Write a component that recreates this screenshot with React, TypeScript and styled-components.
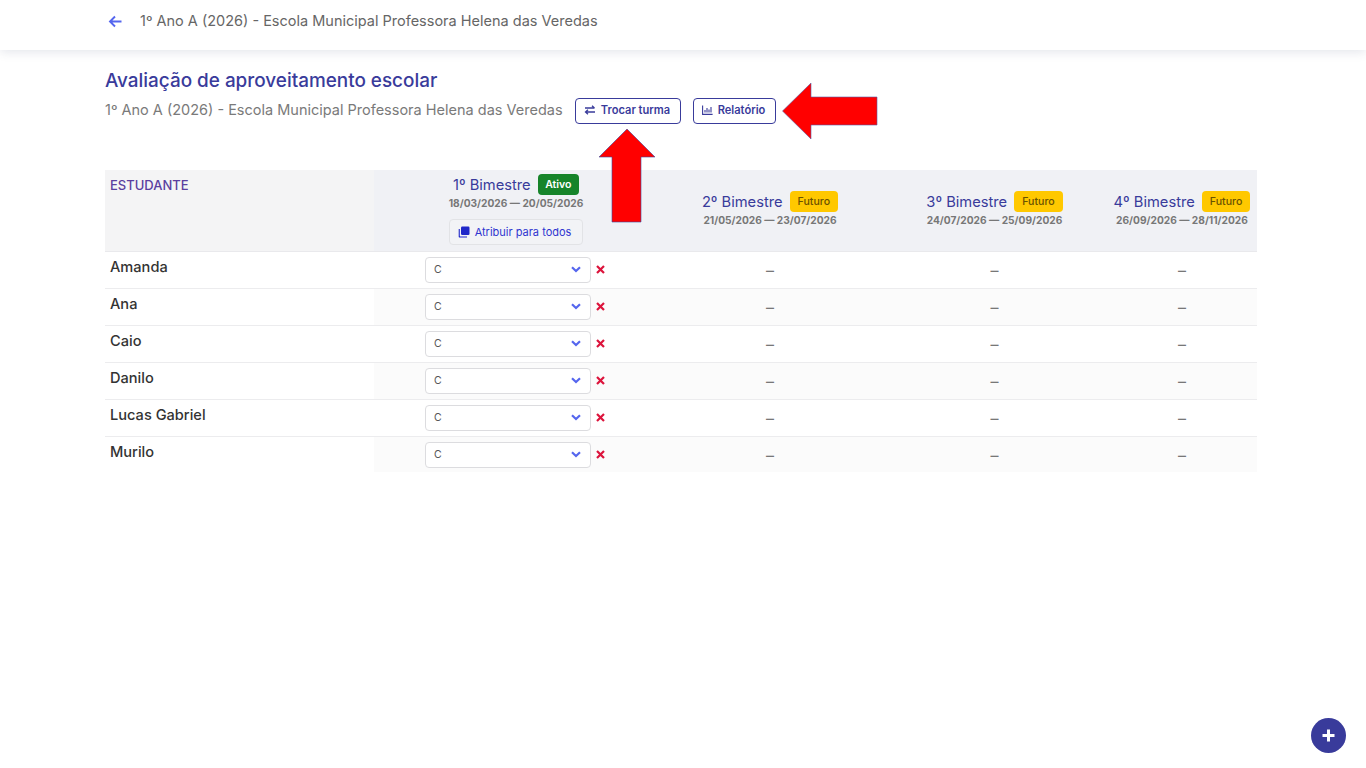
import React from "react";
import styled, { createGlobalStyle } from "styled-components";

const Global = createGlobalStyle`
  html, body { margin: 0; padding: 0; background: #fff; }
  body { font-family: Inter, "Noto Sans", "Liberation Sans", sans-serif; color: #333; }
  * { box-sizing: border-box; }
`;

const Page = styled.div`
  position: relative;
  min-height: 768px;
  background: #fff;
`;

const TopBar = styled.header`
  height: 50px;
  background: #fff;
  box-shadow: 0 2px 10px rgba(60, 70, 110, 0.14);
  padding-left: 108px;
  display: flex;
  align-items: center;
  gap: 17px;
  padding-bottom: 8px;
`;

const BackIcon = styled.svg`
  width: 15px;
  height: 15px;
  display: block;
`;

const TopTitle = styled.span`
  font-size: 14.5px;
  color: #666;
  white-space: nowrap;
  margin-bottom: 2px;
`;

const Main = styled.main`
  padding: 20px 109px 0 105px;
`;

const Heading = styled.h1`
  margin: 0;
  font-size: 18.9px;
  line-height: 21px;
  font-weight: 500;
  color: #393b9b;
`;

const SubRow = styled.div`
  display: flex;
  align-items: center;
  margin-top: 6px;
  height: 28px;
`;

const SubTitle = styled.span`
  font-size: 14.5px;
  color: #7a7a7a;
  width: 470px;
  white-space: nowrap;
  margin-bottom: 4px;
`;

const OutlineButton = styled.button<{ $w: number }>`
  width: ${(p) => p.$w}px;
  height: 26px;
  margin-right: 12px;
  border: 1px solid #393b9b;
  border-radius: 4px;
  background: #fff;
  color: #393b9b;
  font: 600 11.1px Inter, "Noto Sans", sans-serif;
  display: flex;
  align-items: center;
  justify-content: center;
  gap: 5px;
  padding: 0 2px 2px 0;
  white-space: nowrap;
`;

const Table = styled.div`
  margin-top: 45px;
  display: grid;
  grid-template-columns: 269px 284px 224px 225px 150px;
`;

const HeadStudent = styled.div`
  height: 82px;
  background: #f4f4f5;
  border-bottom: 1px solid #e9e9ec;
  padding: 7px 5px;
  font-size: 13px;
  line-height: 16px;
  font-weight: 500;
  color: #5b3f9f;
`;

const HeadCell = styled.div<{ $active?: boolean }>`
  height: 82px;
  background: #f0f1f5;
  border-bottom: 1px solid #e9e9ec;
  display: flex;
  flex-direction: column;
  align-items: center;
  justify-content: ${(p) => (p.$active ? "flex-start" : "center")};
  padding-top: ${(p) => (p.$active ? "4px" : "0")};
  padding-bottom: ${(p) => (p.$active ? "0" : "3px")};
`;

const HeadTitleRow = styled.div`
  display: flex;
  align-items: center;
  gap: 7px;
  height: 21px;
  margin-bottom: 1px;
`;

const BimTitle = styled.span`
  font-size: 14.7px;
  color: #393b9b;
  white-space: nowrap;
`;

const Badge = styled.span<{ $variant: "active" | "future" }>`
  height: 21px;
  padding: 0 ${(p) => (p.$variant === "active" ? 7.5 : 8)}px;
  border-radius: 4px;
  font-size: 10.6px;
  line-height: 21px;
  font-weight: ${(p) => (p.$variant === "active" ? 600 : 500)};
  background: ${(p) => (p.$variant === "active" ? "#17842a" : "#ffc800")};
  color: ${(p) => (p.$variant === "active" ? "#fff" : "#6a5200")};
`;

const Dates = styled.div`
  font-size: 10.2px;
  line-height: 14px;
  font-weight: 700;
  color: #777;
  white-space: nowrap;
`;

const AssignButton = styled.button`
  margin-top: 9px;
  width: 134px;
  height: 26px;
  border: 1px solid #e2e3e6;
  border-radius: 4px;
  background: #f2f3f6;
  color: #2f35d0;
  font: 400 11px Inter, "Noto Sans", sans-serif;
  display: flex;
  align-items: center;
  justify-content: center;
  gap: 5px;
  padding: 0 3px 1px 0;
  white-space: nowrap;
`;

const NameCell = styled.div<{ $last?: boolean }>`
  height: ${(p) => (p.$last ? "35px" : "37px")};
  padding: 6px 5px 0;
  font-size: 14.6px;
  line-height: 18px;
  font-weight: 500;
  color: #333;
  border-bottom: ${(p) => (p.$last ? "none" : "1px solid #ececee")};
`;

const Cell = styled.div<{ $last?: boolean; $even?: boolean }>`
  height: ${(p) => (p.$last ? "35px" : "37px")};
  display: flex;
  align-items: center;
  justify-content: center;
  padding-bottom: ${(p) => (p.$last ? "0" : "1px")};
  background: ${(p) => (p.$even ? "#fbfbfb" : "#fff")};
  border-bottom: ${(p) => (p.$last ? "none" : "1px solid #ececee")};
  font-size: 16px;
  color: #777;
`;

const GradeRow = styled.div`
  display: flex;
  align-items: center;
  gap: 5px;
  margin-right: 2px;
`;

const SelectBox = styled.div`
  width: 166px;
  height: 26px;
  border: 1px solid #dcdcdf;
  border-radius: 4px;
  background: #fff;
  display: flex;
  align-items: center;
  justify-content: space-between;
  padding: 0 9px 0 8px;
  font-size: 10.5px;
  color: #555;
`;

const Overlay = styled.svg`
  position: absolute;
  left: 0;
  top: 0;
  width: 1366px;
  height: 768px;
  pointer-events: none;
`;

const Fab = styled.button`
  position: fixed;
  left: 1311px;
  top: 718px;
  width: 35px;
  height: 35px;
  border: 0;
  border-radius: 50%;
  background: #393b9b;
  display: flex;
  align-items: center;
  justify-content: center;
  padding: 0;
`;

const periods = [
  { n: "2º Bimestre", d: "21/05/2026 — 23/07/2026" },
  { n: "3º Bimestre", d: "24/07/2026 — 25/09/2026" },
  { n: "4º Bimestre", d: "26/09/2026 — 28/11/2026" },
];
const students = ["Amanda", "Ana", "Caio", "Danilo", "Lucas Gabriel", "Murilo"];

export default function App() {
  return (
    <Page>
      <Global />
      <TopBar>
        <BackIcon viewBox="0 0 15 15" fill="none" stroke="#5566ee" strokeWidth="1.9">
          <path d="M13.5 7.5H2M7 2.5 2 7.5l5 5" />
        </BackIcon>
        <TopTitle>1º Ano A (2026) - Escola Municipal Professora Helena das Veredas</TopTitle>
      </TopBar>
      <Main>
        <Heading>Avaliação de aproveitamento escolar</Heading>
        <SubRow>
          <SubTitle>1º Ano A (2026) - Escola Municipal Professora Helena das Veredas</SubTitle>
          <OutlineButton $w={106}>
            <svg width="12" height="10" viewBox="0 0 12 10" fill="none" stroke="#393b9b" strokeWidth="1.3">
              <path d="M1 3h9.5M8 .8 10.5 3M11 7H1.5M4 4.8 1.5 7 4 9.2" />
            </svg>
            Trocar turma
          </OutlineButton>
          <OutlineButton $w={83}>
            <svg width="11" height="10" viewBox="0 0 11 10" fill="none" stroke="#393b9b" strokeWidth="1.1">
              <path d="M.6.5v8.9h10M3 7.5V5M5 7.5V3M7 7.5V4.5M9 7.5V2" />
            </svg>
            Relatório
          </OutlineButton>
        </SubRow>
        <Table>
          <HeadStudent>ESTUDANTE</HeadStudent>
          <HeadCell $active>
            <HeadTitleRow>
              <BimTitle>1º Bimestre</BimTitle>
              <Badge $variant="active">Ativo</Badge>
            </HeadTitleRow>
            <Dates>18/03/2026 — 20/05/2026</Dates>
            <AssignButton>
              <svg width="12" height="12" viewBox="0 0 12 12" fill="#1f27c9">
                <rect x="3" y="0.5" width="8.5" height="8.5" rx="1.2" />
                <path d="M1.8 3v7c0 .2.2.4.4.4H9v1.1H1.7C1 11.500 .7 11.100 .7 10.500V3z" />
              </svg>
              Atribuir para todos
            </AssignButton>
          </HeadCell>
          {periods.map((p) => (
            <HeadCell key={p.n}>
              <HeadTitleRow>
                <BimTitle>{p.n}</BimTitle>
                <Badge $variant="future">Futuro</Badge>
              </HeadTitleRow>
              <Dates>{p.d}</Dates>
            </HeadCell>
          ))}
          {students.map((s, i) => {
            const last = i === students.length - 1;
            const even = i % 2 === 1;
            return (
              <React.Fragment key={s}>
                <NameCell $last={last}>{s}</NameCell>
                <Cell $last={last} $even={even}>
                  <GradeRow>
                    <SelectBox>
                      C
                      <svg width="10" height="7" viewBox="0 0 10 7" fill="none" stroke="#5566ee" strokeWidth="2.2">
                        <path d="M1 1.200 5 5l4-3.800" />
                      </svg>
                    </SelectBox>
                    <svg width="9" height="9" viewBox="0 0 9 9" fill="none" stroke="#dc143c" strokeWidth="2.2">
                      <path d="M1 1l7 7M8 1 1 8" />
                    </svg>
                  </GradeRow>
                </Cell>
                {periods.map((p) => (
                  <Cell key={p.n} $last={last} $even={even}>–</Cell>
                ))}
              </React.Fragment>
            );
          })}
        </Table>
      </Main>
      <Overlay viewBox="0 0 1366 768">
        <polygon points="782.500,111 811,83 811,97 877,97 877,125 811,125 811,139" fill="#ff0000" stroke="#5560a8" strokeWidth="0.6" />
        <polygon points="627,129 655,157 641,157 641,222 612,222 612,157 599,157" fill="#ff0000" stroke="#3b4aa0" strokeWidth="0.6" />
      </Overlay>
      <Fab>
        <svg width="13" height="13" viewBox="0 0 13 13" fill="none" stroke="#fff" strokeWidth="3">
          <path d="M6.500 .5v12M.5 6.500h12" />
        </svg>
      </Fab>
    </Page>
  );
}
